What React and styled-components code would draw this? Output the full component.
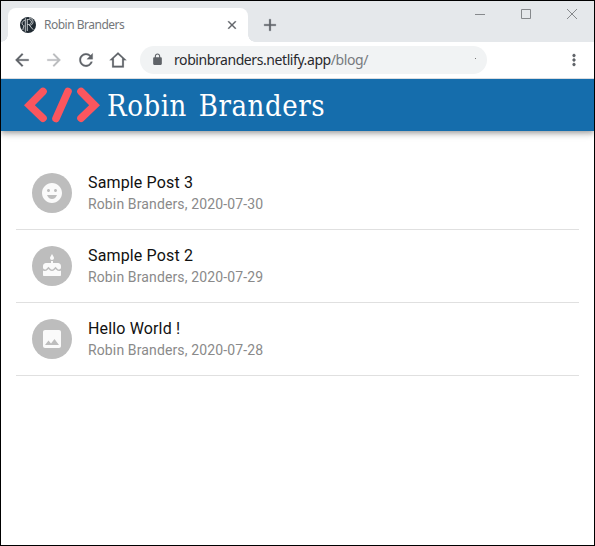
import React from 'react';
import styled, { createGlobalStyle } from 'styled-components';

const GlobalStyle = createGlobalStyle`
  *, *::before, *::after { box-sizing: border-box; }
  body { margin: 0; background: #fff; }
`;

const Window = styled.div`
  display: flex;
  flex-direction: column;
  width: 595px;
  height: 546px;
  border: 1px solid #000;
  background: #fff;
  overflow: hidden;
`;

const TabStrip = styled.div`
  display: flex;
  align-items: flex-end;
  flex: none;
  height: 41px;
  padding-left: 7px;
  background: #e5e8eb;
`;

const Tab = styled.div`
  position: relative;
  display: flex;
  align-items: center;
  width: 240px;
  height: 34px;
  padding: 0 9px 0 12px;
  background: #fff;
  border-radius: 8px 8px 0 0;

  &::before, &::after {
    content: '';
    position: absolute;
    bottom: 0;
    width: 7px;
    height: 7px;
  }
  &::before {
    left: -7px;
    background: radial-gradient(circle at 0 0, transparent 6.5px, #fff 7px);
  }
  &::after {
    right: -7px;
    background: radial-gradient(circle at 100% 0, transparent 6.5px, #fff 7px);
  }
`;

const TabTitle = styled.span`
  flex: 1;
  margin-left: 8px;
  font: 12px/16px 'Noto Sans', sans-serif;
  letter-spacing: -0.5px;
  color: #74777b;
  white-space: nowrap;
`;

const Glyph = styled.svg`
  display: block;
  flex: none;
  width: ${(p) => p.$size}px;
  height: ${(p) => p.$size}px;
  fill: ${(p) => p.$color || '#5f6368'};
  stroke: ${(p) => p.$color || '#5f6368'};
  stroke-width: ${(p) => p.$weight || 0};
`;

const NewTab = styled.div`
  align-self: center;
  margin: 7px 0 0 12px;
`;

const WindowControls = styled.div`
  display: flex;
  align-self: flex-start;
  gap: 36px;
  margin: 8px 17px 0 auto;
`;

const Control = styled.svg`
  display: block;
  width: 10px;
  height: 10px;
  fill: none;
  stroke: #86898c;
  stroke-width: 1;
`;

const Toolbar = styled.div`
  display: flex;
  align-items: center;
  flex: none;
  height: 37px;
  padding: 0 11px 1px 11px;
  border-bottom: 1px solid #dadce0;
`;

const NavButtons = styled.div`
  display: flex;
  gap: 12px;
`;

const AddressBar = styled.div`
  display: flex;
  align-items: center;
  width: 347px;
  height: 28px;
  margin-left: 12px;
  padding: 0 11px;
  border-radius: 14px;
  background: #f1f3f4;
`;

const Url = styled.span`
  flex: 1;
  margin-left: 10px;
  font: 14px/20px 'Noto Sans', sans-serif;
  letter-spacing: -0.42px;
  color: #292a2d;
  white-space: nowrap;
`;

const UrlPath = styled.span`
  color: #777a7e;
`;

const Speck = styled.span`
  width: 1px;
  height: 1px;
  margin-bottom: 3px;
  background: #777;
`;

const MenuSlot = styled.div`
  margin-left: auto;
`;

const SiteHeader = styled.header`
  display: flex;
  align-items: center;
  flex: none;
  height: 52px;
  padding-left: 23px;
  background: #156dac;
  box-shadow: 0 2px 4px -1px rgba(0, 0, 0, 0.2), 0 4px 5px rgba(0, 0, 0, 0.14),
    0 1px 10px rgba(0, 0, 0, 0.12);
  clip-path: inset(0 0 -16px 0);
`;

const Logo = styled.svg`
  display: block;
  width: 76px;
  height: 36px;
  fill: none;
  stroke: #fb565e;
  stroke-width: 7.6;
  stroke-linecap: round;
`;

const SiteTitle = styled.h1`
  margin: 2px 0 0 7px;
  font: 400 29px/36px 'DejaVu Serif', serif;
  font-stretch: condensed;
  letter-spacing: 0.55px;
  word-spacing: 3px;
  color: #fff;
  white-space: nowrap;
`;

const PostList = styled.ul`
  margin: 26px 15px 0;
  padding: 0;
  list-style: none;
`;

const PostRow = styled.li`
  display: flex;
  align-items: center;
  height: 73px;
  padding: 0 16px;
  border-bottom: 1px solid #e0e0e0;
`;

const Avatar = styled.div`
  display: flex;
  align-items: center;
  justify-content: center;
  width: 40px;
  height: 40px;
  margin-right: 16px;
  border-radius: 50%;
  background: #bdbdbd;
`;

const PostTitle = styled.div`
  font: 16px/24px Roboto, sans-serif;
  letter-spacing: 0.15px;
  color: #111;
`;

const PostMeta = styled.div`
  font: 14px/18px Roboto, sans-serif;
  letter-spacing: 0.13px;
  color: #8a8a8a;
  padding-bottom: 2px;
`;

const paths = {
  back: 'M20 11H7.83l5.59-5.59L12 4l-8 8 8 8 1.41-1.41L7.83 13H20v-2z',
  forward: 'M12 4l-1.41 1.41L16.17 11H4v2h12.17l-5.58 5.59L12 20l8-8z',
  reload:
    'M17.65 6.35C16.2 4.9 14.21 4 12 4c-4.42 0-7.99 3.58-7.99 8s3.57 8 7.99 8c3.73 0 6.84-2.55 7.73-6h-2.08c-.82 2.33-3.04 4-5.65 4-3.31 0-6-2.69-6-6s2.69-6 6-6c1.66 0 3.14.69 4.22 1.78L13 11h7V4l-2.35 2.35z',
  home: 'M12 2.6L1.8 12.2H5V21h14v-8.8h3.2L12 2.6zm0 2.8l5 4.6v9H7v-9l5-4.6z',
  lock: 'M18 8h-1V6c0-2.76-2.24-5-5-5S7 3.24 7 6v2H6c-1.1 0-2 .9-2 2v10c0 1.1.9 2 2 2h12c1.1 0 2-.9 2-2V10c0-1.1-.9-2-2-2zm-3.1 0H9.1V6c0-1.71 1.39-3.1 2.9-3.1s2.9 1.39 2.9 3.1v2z',
  more: 'M12 8c1.1 0 2-.9 2-2s-.9-2-2-2-2 .9-2 2 .9 2 2 2zm0 2c-1.1 0-2 .9-2 2s.9 2 2 2 2-.9 2-2-.9-2-2-2zm0 6c-1.1 0-2 .9-2 2s.9 2 2 2 2-.9 2-2-.9-2-2-2z',
  close:
    'M19 6.41L17.59 5 12 10.59 6.41 5 5 6.41 10.59 12 5 17.59 6.41 19 12 13.41 17.59 19 19 17.59 13.41 12z',
  add: 'M13 5h-2v6H5v2h6v6h2v-6h6v-2h-6z',
  face: 'M12 2C6.48 2 2 6.48 2 12s4.48 10 10 10 10-4.48 10-10S17.52 2 12 2zM8.5 8c.83 0 1.5.67 1.5 1.5S9.33 11 8.5 11 7 10.33 7 9.5 7.67 8 8.5 8zM12 18c-2.28 0-4.22-1.66-5-4h10c-.78 2.34-2.72 4-5 4zm3.5-7c-.83 0-1.5-.67-1.5-1.5S14.67 8 15.5 8s1.5.67 1.5 1.5-.67 1.5-1.5 1.5z',
  cake: 'M12 6c1.11 0 2-.9 2-2 0-.38-.1-.73-.29-1.03L12 0l-1.71 2.97c-.19.3-.29.65-.29 1.03 0 1.1.9 2 2 2zm4.6 9.99l-1.07-1.07-1.08 1.07c-1.3 1.3-3.58 1.31-4.89 0l-1.07-1.07-1.09 1.07C6.75 16.64 5.88 17 4.96 17c-.73 0-1.4-.23-1.96-.61V21c0 .55.45 1 1 1h16c.55 0 1-.45 1-1v-4.61c-.56.38-1.23.61-1.96.61-.92 0-1.79-.36-2.44-1.01zM18 9h-5V7h-2v2H6c-1.66 0-3 1.34-3 3v1.54c0 1.08.88 1.96 1.96 1.96.52 0 1.02-.2 1.38-.57l2.14-2.13 2.13 2.13c.74.74 2.03.74 2.77 0l2.14-2.13 2.13 2.13c.37.37.86.57 1.38.57 1.08 0 1.96-.88 1.96-1.96V12C21 10.34 19.66 9 18 9z',
  image:
    'M21 19V5c0-1.1-.9-2-2-2H5c-1.1 0-2 .9-2 2v14c0 1.1.9 2 2 2h14c1.1 0 2-.9 2-2zM8.5 13.5l2.51 3.01L14.5 12l4.5 6H5l3.5-4.5z',
};

const Icon = ({ name, size = 20, color, weight }) => (
  <Glyph viewBox="0 0 24 24" $size={size} $color={color} $weight={weight}>
    <path d={paths[name]} />
  </Glyph>
);

const Favicon = () => (
  <Glyph viewBox="0 0 16 16" $size={16} $color="#202a32">
    <circle cx="8" cy="8" r="8" />
    <g fill="none" stroke="#d5d8da" strokeWidth="0.9">
      <path d="M5.3 1.2v13.6M7.3 2v12M7.3 2.5h1.4c3.6 0 3.6 5 0 5H7.3M8.7 7.5l4.5 5.2" />
      <path d="M4.8 3.4C1.2 4.2 1.2 8.2 4.5 9M3.7 9.2L2.8 13" />
      <path d="M9 1c5 0 5.2 6.5 1.3 7.3" />
    </g>
  </Glyph>
);

const posts = [
  { icon: 'face', title: 'Sample Post 3', date: '2020-07-30' },
  { icon: 'cake', title: 'Sample Post 2', date: '2020-07-29' },
  { icon: 'image', title: 'Hello World !', date: '2020-07-28' },
];

export default function App() {
  return (
    <Window>
      <GlobalStyle />
      <TabStrip>
        <Tab>
          <Favicon />
          <TabTitle>Robin Branders</TabTitle>
          <Icon name="close" size={14} weight={0.6} />
        </Tab>
        <NewTab>
          <Icon name="add" size={20} weight={0.3} />
        </NewTab>
        <WindowControls>
          <Control viewBox="0 0 10 10"><path d="M0 5.5h10" /></Control>
          <Control viewBox="0 0 10 10"><path d="M.5.5h9v9h-9z" /></Control>
          <Control viewBox="0 0 10 10"><path d="M0 0l10 10M10 0L0 10" /></Control>
        </WindowControls>
      </TabStrip>
      <Toolbar>
        <NavButtons>
          <Icon name="back" weight={0.3} />
          <Icon name="forward" color="#babcbe" weight={0.3} />
          <Icon name="reload" weight={0.3} />
          <Icon name="home" weight={0.2} />
        </NavButtons>
        <AddressBar>
          <Icon name="lock" size={13} />
          <Url>robinbranders.netlify.app<UrlPath>/blog/</UrlPath></Url>
          <Speck />
        </AddressBar>
        <MenuSlot>
          <Icon name="more" size={18} weight={0.4} />
        </MenuSlot>
      </Toolbar>
      <SiteHeader>
        <Logo viewBox="0 0 76 36">
          <path d="M19 4.5L5.4 18.2l13.6 13M44 4.5L32 31.5M57 4.5l13.6 13.7-13.6 13" strokeLinejoin="miter" />
        </Logo>
        <SiteTitle>Robin Branders</SiteTitle>
      </SiteHeader>
      <PostList>
        {posts.map((post) => (
          <PostRow key={post.title}>
            <Avatar><Icon name={post.icon} size={24} color="#fafafa" /></Avatar>
            <div>
              <PostTitle>{post.title}</PostTitle>
              <PostMeta>Robin Branders, {post.date}</PostMeta>
            </div>
          </PostRow>
        ))}
      </PostList>
    </Window>
  );
}
